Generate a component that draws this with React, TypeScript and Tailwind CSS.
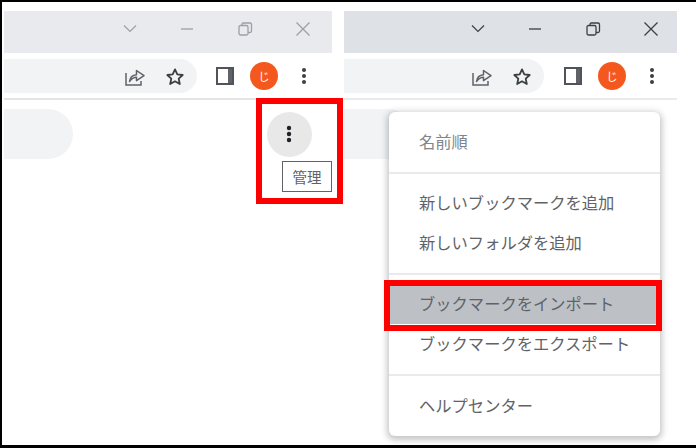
const jpFont = { fontFamily: '"Noto Sans CJK JP", "Noto Sans", sans-serif' };

function WindowIcons({ color, pad }: { color: string; pad: string }) {
  return (
    <div className={`flex h-[42px] items-center justify-end gap-[38px] pb-[6px] ${pad}`} style={{ backgroundColor: color === '#3c4043' ? '#dee1e6' : '#e8eaed' }}>
      <svg className="-mr-[1px]" width="20" height="20" viewBox="0 0 20 20" fill="none" stroke={color} strokeWidth="1.2">
        <path d="M4 6.5 10 12.5 16 6.5" />
      </svg>
      <svg width="20" height="20" viewBox="0 0 20 20" fill="none" stroke={color} strokeWidth="1.3">
        <path d="M4 10h12" />
      </svg>
      <svg width="20" height="20" viewBox="0 0 20 20" fill="none" stroke={color} strokeWidth="1.3">
        <rect x="4" y="6.5" width="9" height="9.5" rx="1.5" />
        <path d="M7 6.5V5.5A1.5 1.5 0 0 1 8.5 4H15a1.5 1.5 0 0 1 1.5 1.5V12A1.5 1.5 0 0 1 15 13.5H13" />
      </svg>
      <svg width="20" height="20" viewBox="0 0 20 20" fill="none" stroke={color} strokeWidth="1.3">
        <path d="M3.5 3.5 16.5 16.5M16.5 3.5 3.5 16.5" />
      </svg>
    </div>
  );
}

function Toolbar({ pad, gap }: { pad: string; gap: string }) {
  return (
    <div className={`flex h-[45px] items-center pt-[1px] ${pad}`}>
      <div className="flex h-[34px] flex-1 items-center justify-end gap-[19px] rounded-r-full bg-[#f1f3f4] pr-[12px]">
        <svg width="21" height="19" viewBox="0 0 21 19" fill="none" stroke="#5f6368" strokeWidth="1.5">
          <path d="M1 6v12h15v-4" />
          <path d="M4.5 14.5c.5-4 3-6.500 7-6.800V3.500l7.500 5.200-7.500 5v-3.400c-3 0-5 1.300-7 4.200Z" strokeLinejoin="round" />
        </svg>
        <svg width="20" height="19" viewBox="0 0 20 19" fill="none" stroke="#3c4043" strokeWidth="1.800">
          <path d="m10 2.400 2.300 5 5.400.6-4 3.700 1.100 5.300-4.800-2.700-4.800 2.700 1.100-5.300-4-3.700 5.400-.6Z" strokeLinejoin="round" />
        </svg>
      </div>
      <div className={`flex h-[18px] w-[18px] border-2 border-[#50545a] ${gap}`}>
        <div className="flex-1 bg-white" />
        <div className="w-[4px] bg-[#5f6368]" />
      </div>
      <div
        className="ml-[16px] flex h-[28px] w-[28px] items-center justify-center rounded-full bg-[#f4581f] text-[11px] text-white"
        style={jpFont}
      >
        じ
      </div>
      <svg className="ml-[23px]" width="6" height="20" viewBox="0 0 6 20" fill="#3c4043">
        <circle cx="3" cy="4" r="2" />
        <circle cx="3" cy="10" r="2" />
        <circle cx="3" cy="16" r="2" />
      </svg>
    </div>
  );
}

function MenuRow({ label, muted, active }: { label: string; muted?: boolean; active?: boolean }) {
  return (
    <div
      className={`flex h-[40px] items-center pb-[2px] pl-[30px] text-[16.3px] ${muted ? 'text-[#80868b]' : 'text-[#5f6368]'} ${active ? 'bg-[#bdc1c6] text-[#4a4d52]' : ''}`}
    >
      {label}
    </div>
  );
}

export default function App() {
  return (
    <div className="relative h-[448px] w-[696px] overflow-hidden border-t-2 border-b-[3px] border-l-2 border-black bg-white pl-[2px]" style={jpFont}>
      <div className="flex">
        <div className="w-[328px] pt-[9px]">
          <WindowIcons color="#9aa0a6" pad="pr-[19px]" />
          <Toolbar pad="pr-[25px]" gap="ml-[19px]" />
          <div className="h-[2px] bg-[#e4e4e4]" />
          <div className="flex items-start justify-between pr-[20px] pt-[9px]">
            <div className="h-[50px] w-[69px] rounded-r-full bg-[#f1f3f4]" />
            <div className="relative mt-[3px] flex h-[45px] w-[45px] items-center justify-center rounded-full bg-[#e8e8e8]">
              <svg className="-ml-[1px] -mt-[1px]" width="6" height="18" viewBox="0 0 6 18" fill="#202124">
                <circle cx="3" cy="3" r="2.200" />
                <circle cx="3" cy="9" r="2.200" />
                <circle cx="3" cy="15" r="2.200" />
              </svg>
              <div className="absolute left-[15px] top-[49px] flex h-[31px] w-[50px] items-center justify-center border border-[#5f6368] bg-white text-[14.500px] text-[#5f6368]">
                管理
              </div>
            </div>
          </div>
        </div>

        <div className="relative ml-[12px] w-[333px] pt-[9px]">
          <WindowIcons color="#3c4043" pad="pr-[16px]" />
          <Toolbar pad="pr-[22px]" gap="ml-[20px]" />
          <div className="h-[2px] bg-[#e8eaed]" />
          <div className="pt-[9px]">
            <div className="h-[50px] w-[69px] rounded-r-full bg-[#f1f3f4]" />
          </div>

          <div className="absolute left-[45px] top-[110px] w-[271px] rounded-[6px] bg-white shadow-[0_2px_6px_2px_rgba(60,64,67,0.3)]">
            <div className="py-[10px]">
              <MenuRow label="名前順" muted />
            </div>
            <div className="h-[2px] bg-[#e8eaed]" />
            <div className="pb-[10px] pt-[9px]">
              <MenuRow label="新しいブックマークを追加" />
              <MenuRow label="新しいフォルダを追加" />
            </div>
            <div className="h-[2px] bg-[#e8eaed]" />
            <div className="pb-[10px] pt-[9px]">
              <MenuRow label="ブックマークをインポート" active />
              <MenuRow label="ブックマークをエクスポート" />
            </div>
            <div className="h-[2px] bg-[#e8eaed]" />
            <div className="py-[10px]">
              <MenuRow label="ヘルプセンター" />
            </div>
          </div>
        </div>
      </div>

      <div className="absolute left-[254px] top-[96px] h-[106px] w-[87px] border-[6px] border-[#ff0000]" />
      <div className="absolute left-[382px] top-[278px] h-[51px] w-[278px] border-[6px] border-[#ff0000]" />
    </div>
  );
}
